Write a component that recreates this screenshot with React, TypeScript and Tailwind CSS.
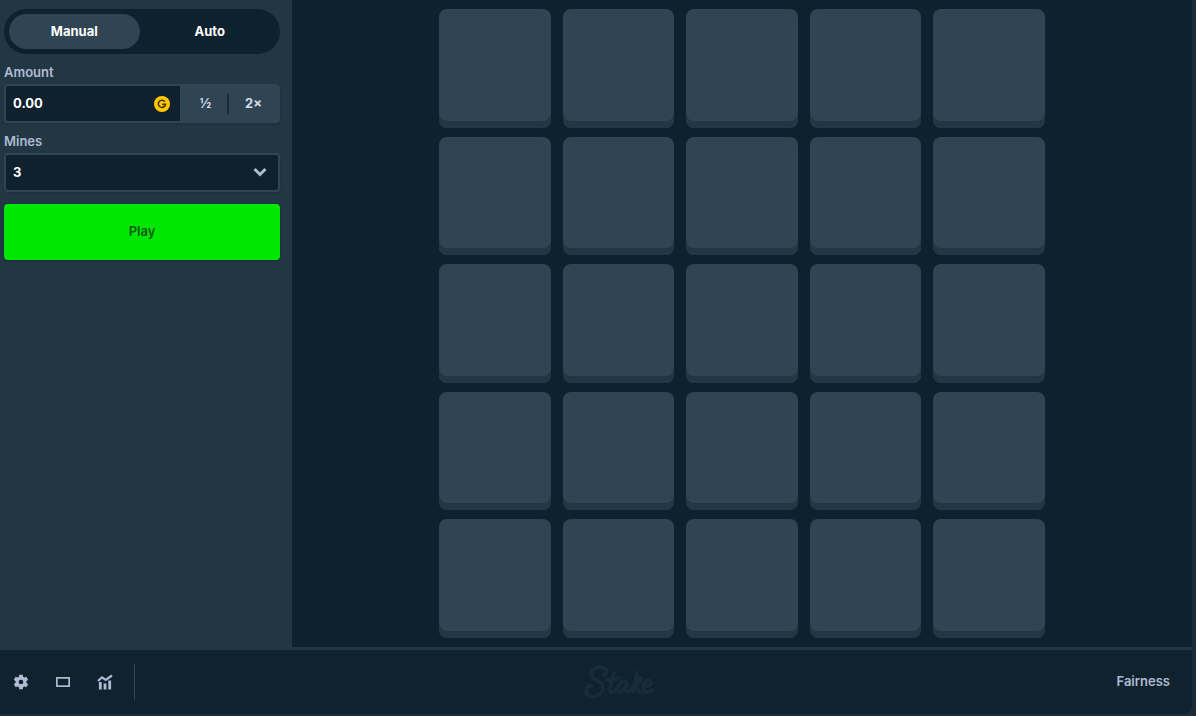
import React from "react";

const label = "leading-5 font-semibold text-[#b1bad3]";

function GearIcon() {
  return (
    <svg viewBox="0 0 24 24" className="size-4" fill="currentColor" aria-hidden="true">
      <path
        fillRule="evenodd"
        d="M9.400 1h5.200l.6 3.300 1.600 1 3.300-1.100 2.500 4.300-2.500 2.200v2.600l2.500 2.200-2.500 4.300-3.300-1.100-1.600 1-.6 3.300H9.400l-.6-3.300-1.600-1-3.300 1.100-2.500-4.300 2.500-2.200v-2.600L1.400 8.500l2.500-4.300 3.300 1.100 1.600-1zM12 8.500a3.500 3.500 0 1 0 0 7 3.500 3.500 0 0 0 0-7z"
      />
    </svg>
  );
}

function TheatreIcon() {
  return (
    <svg viewBox="0 0 16 16" className="size-4" fill="none" stroke="currentColor" strokeWidth="1.700" aria-hidden="true">
      <rect x="1.850" y="3.850" width="12.300" height="8.300" />
    </svg>
  );
}

function StatsIcon() {
  return (
    <svg viewBox="0 0 16 16" className="size-4" fill="none" stroke="currentColor" aria-hidden="true">
      <path d="M1 7 5 3.300 8.700 6 15 1.500" strokeWidth="2.200" />
      <path d="M3.300 8v7.500M8 9.500v6M12.700 6.500v9" strokeWidth="2.800" />
    </svg>
  );
}

function StakeLogo() {
  return (
    <svg viewBox="0 0 72 36" className="h-9 w-[72px]" fill="none" stroke="#172b38" strokeWidth="3.600" strokeLinecap="round" strokeLinejoin="round" role="img" aria-label="Stake">
      <path d="M20 11C25 8 22 2 15 3 9 4 5 9 8 13c3 4 12 4 11 11-1 7-10 11-15 7-4-4-1-10 4-9" />
      <path d="M30 9c-1 6-5 13-4 18 1 4 5 1 7-3M22 16c5 0 9-1 13-2" />
      <path d="M43 19c-4-4-10 2-9 7 1 5 7 1 9-7-1 5-2 8 0 9 2 0 4-2 5-5" />
      <path d="M53 8c-1 7-3 13-4 20M50 22c4-2 9-5 7-8-2-2-5 3-7 8 4 0 3 7 7 7" />
      <path d="M59 23c4 0 9-2 8-5-2-4-8 0-8 5 0 7 7 6 10 3" />
    </svg>
  );
}

export default function App() {
  const [mode, setMode] = React.useState("Manual");
  return (
    <div className="min-h-screen bg-[#1a2c38] pr-1 font-['Inter','Liberation_Sans',sans-serif] text-[13px] text-white">
      <div className="flex min-h-screen flex-col border-b-2 border-[#1a2c38]">
        <div className="flex flex-1 bg-[#0d222e]">
          <aside className="flex w-[292px] shrink-0 flex-col bg-[#213743] pt-[9px] pr-3 pl-1">
            <div className="flex h-[45px] gap-[5px] rounded-full bg-[#0d222e] p-[5px]">
              {["Manual", "Auto"].map((name) => (
                <button
                  key={name}
                  type="button"
                  aria-pressed={mode === name}
                  onClick={() => setMode(name)}
                  className={
                    mode === name
                      ? "flex-1 rounded-full bg-[#2f4553] font-bold"
                      : "flex-1 rounded-full font-bold"
                  }
                >
                  {name}
                </button>
              ))}
            </div>
            <label htmlFor="amount" className={label + " mt-2"}>
              Amount
            </label>
            <div className="mt-[2px] flex h-[39px] rounded bg-[#2f4553] p-[2px] shadow-sm">
              <div className="flex min-w-0 flex-1 items-center rounded-l-xs bg-[#0f212e] pr-[10px] pl-[7px]">
                <input id="amount" defaultValue="0.00" className="min-w-0 flex-1 bg-transparent font-bold outline-none" />
                <svg viewBox="0 0 16 16" className="size-4" aria-hidden="true">
                  <circle cx="8" cy="8" r="8" fill="#ffc800" />
                  <path d="M10.900 5.800A3.600 3.600 0 1 0 11.500 8.400H8.200" fill="none" stroke="#473800" strokeWidth="1.600" />
                </svg>
              </div>
              <div className="flex w-[98px] items-center font-bold text-[#d5dceb]">
                <button type="button" className="h-full w-[47px] pl-1">½</button>
                <span className="h-5 w-[2px] bg-[#1a2c38]" />
                <button type="button" className="h-full flex-1">2×</button>
              </div>
            </div>
            <label htmlFor="mines" className={label + " mt-2"}>
              Mines
            </label>
            <div className="relative mt-[2px] h-[39px]">
              <select
                id="mines"
                defaultValue="3"
                className="h-full w-full appearance-none rounded border-2 border-[#2f4553] bg-[#0f212e] px-[7px] font-bold shadow-sm"
              >
                {Array.from({ length: 24 }, (_, i) => (
                  <option key={i}>{i + 1}</option>
                ))}
              </select>
              <svg viewBox="0 0 16 16" className="pointer-events-none absolute top-[11px] right-3 size-4 text-[#b1bad3]" fill="none" stroke="currentColor" strokeWidth="3" aria-hidden="true">
                <path d="M2.500 5 8 10.500 13.500 5" />
              </svg>
            </div>
            <button type="button" className="mt-3 h-14 rounded bg-[#00e701] font-semibold text-[#055a0a] shadow-sm">
              Play
            </button>
          </aside>
          <main className="flex flex-1 justify-center border-b-3 border-[#213743] pt-[9px] pb-[9px]">
            <div className="grid w-[606px] grid-cols-5 grid-rows-5 gap-x-3 gap-y-[9px]">
              {Array.from({ length: 25 }, (_, i) => (
                <button
                  key={i}
                  type="button"
                  aria-label={"Tile " + (i + 1)}
                  className="rounded-lg bg-[#2f4553] shadow-[inset_0_-7px_0_#213743]"
                />
              ))}
            </div>
          </main>
        </div>
        <footer className="flex h-16 items-center justify-between rounded-br-lg bg-[#0f222e] pr-[22px]">
          <div className="flex items-center text-[#b1bad3]">
            <button type="button" aria-label="Settings" className="grid h-9 w-[42px] place-items-center"><GearIcon /></button>
            <button type="button" aria-label="Theatre mode" className="grid h-9 w-[42px] place-items-center"><TheatreIcon /></button>
            <button type="button" aria-label="Live stats" className="grid h-9 w-[42px] place-items-center"><StatsIcon /></button>
            <span className="ml-2 h-9 w-px bg-[#2f4553]" />
          </div>
          <StakeLogo />
          <a href="#fairness" className="pl-3 font-semibold text-[#b1bad3]">
            Fairness
          </a>
        </footer>
      </div>
    </div>
  );
}
